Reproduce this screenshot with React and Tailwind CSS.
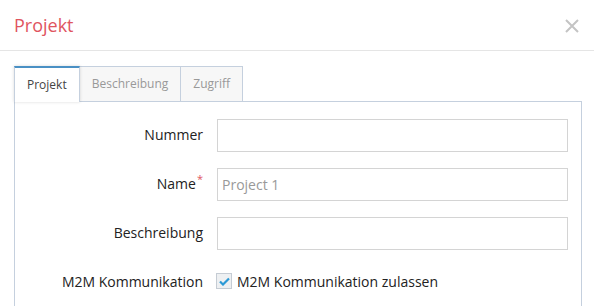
import React from 'react';

const Field = ({ label, required, placeholder }) => (
  <div className="flex items-center h-[33px]">
    <label className="w-[188px] shrink-0 text-right text-[14px] text-[#222] mb-[3px]">
      {label}
      {required && <sup className="text-[#e0555f] text-[11px] ml-[1px]">*</sup>}
    </label>
    <input
      className="ml-[14px] w-[351px] h-[33px] border border-[#d4d4d4] px-[4px] text-[14px] text-[#444] placeholder:text-[#999] outline-none"
      placeholder={placeholder}
    />
  </div>
);

const App = () => {
  return (
    <div className="w-[594px] h-[306px] bg-white overflow-hidden font-['Open_Sans',sans-serif]">
      <div className="flex items-center justify-between h-[51px] border-b border-[#e5e5e5] pl-[14px] pr-[14px]">
        <h1 className="text-[18px] text-[#e0555f]">Projekt</h1>
        <svg width="16" height="16" viewBox="0 0 16 16" className="mt-[2px]">
          <path d="M2 2 L14 14 M14 2 L2 14" stroke="#c4c4c4" strokeWidth="2" />
        </svg>
      </div>

      <div className="pl-[14px] pr-[12px] pt-[15px]">
        <div className="flex h-[36px] border-b border-[#c5d0de]">
          <div className="relative z-10 flex items-center h-[36px] px-[12px] border-t-2 border-t-[#4a90c4] border-x border-x-[#c5d0de] bg-white text-[12px] text-[#444] shadow-[0_0_3px_rgba(0,0,0,0.15)] -mb-[1px]">
            Projekt
          </div>
          <div className="flex items-center h-[35px] px-[12px] border-t border-r border-[#c5d0de] bg-[#f7f7f7] text-[12px] text-[#999]">
            Beschreibung
          </div>
          <div className="flex items-center h-[35px] px-[12px] border-t border-r border-[#c5d0de] bg-[#f7f7f7] text-[12px] text-[#999]">
            Zugriff
          </div>
        </div>
        <div className="border-x border-[#c5d0de] h-[220px] pt-[17px] flex flex-col gap-[16px]">
          <Field label="Nummer" />
          <Field label="Name" required placeholder="Project 1" />
          <Field label="Beschreibung" />
          <div className="flex items-center h-[16px] mt-[7px]">
            <span className="w-[188px] shrink-0 text-right text-[14px] text-[#222]">M2M Kommunikation</span>
            <label className="ml-[13px] flex items-center gap-[5px] text-[14px] text-[#222]">
              <span className="w-[16px] h-[16px] bg-[#eef0f2] border border-[#c5ccd4] flex items-center justify-center">
                <svg width="11" height="9" viewBox="0 0 11 9">
                  <path d="M1 4.5 L4 7.5 L10 1.5" stroke="#2c9ad6" strokeWidth="2.2" fill="none" />
                </svg>
              </span>
              M2M Kommunikation zulassen
            </label>
          </div>
        </div>
      </div>
    </div>
  );
};

export default App;
